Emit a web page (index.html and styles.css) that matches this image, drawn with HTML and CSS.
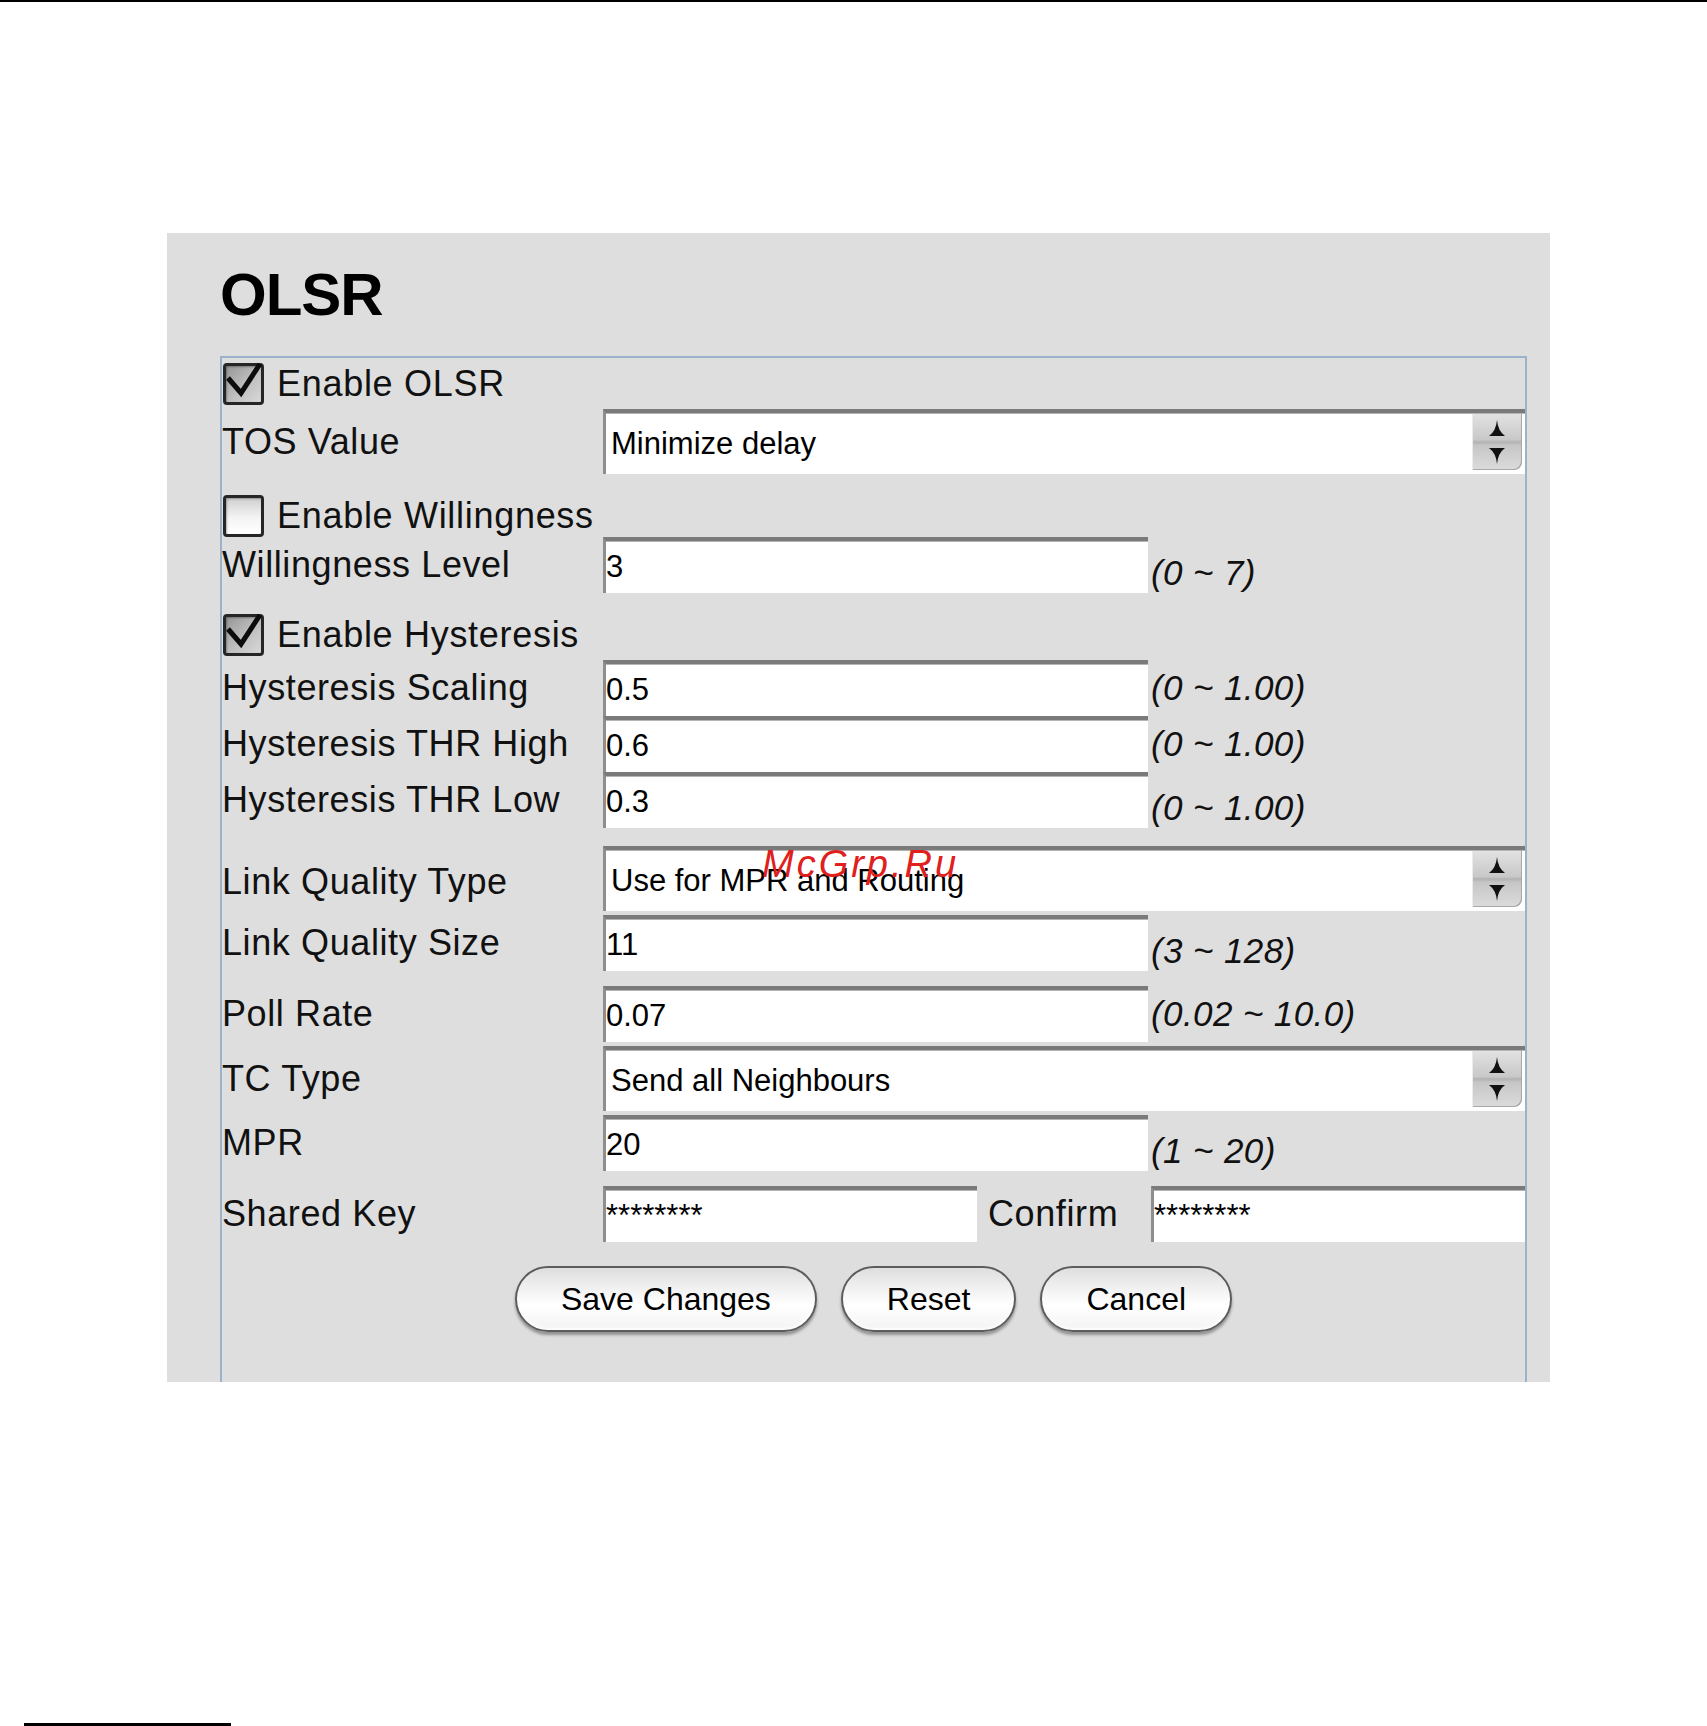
FILE: index.html
```html
<!DOCTYPE html>
<html lang="en">
<head>
    <meta charset="UTF-8">
    <meta name="viewport" content="width=device-width, initial-scale=1.0">
    <title>OLSR</title>
    <link rel="stylesheet" href="styles.css">
</head>
<body>
    <div class="top-rule"></div>

    <div class="panel">
        <h1>OLSR</h1>

        <form id="olsr-form">
            <fieldset>
                <label class="check-row">
                    <span class="check checked">
                        <svg viewBox="0 0 35 36" width="35" height="36"><path d="M2 12 L15 27 L34 -2" /></svg>
                    </span>
                    <span>Enable OLSR</span>
                </label>

                <div class="row select-row tight">
                    <span class="label">TOS Value</span>
                    <div class="select-wrap">
                        <select id="tos-value"><option>Minimize delay</option></select>
                        <span class="spinner">
                            <svg viewBox="0 0 50 56" width="50" height="56"><path d="M25 6 Q26 17 33 22 H17 Q24 17 25 6 Z" /><path d="M17 34 H33 Q26 39 25 50 Q24 39 17 34 Z" /></svg>
                        </span>
                    </div>
                </div>

                <label class="check-row apart">
                    <span class="check"></span>
                    <span>Enable Willingness</span>
                </label>

                <div class="row">
                    <span class="label">Willingness Level</span>
                    <input class="text-input" type="text" value="3">
                    <span class="range low">(0 ~ 7)</span>
                </div>

                <label class="check-row apart">
                    <span class="check checked">
                        <svg viewBox="0 0 35 36" width="35" height="36"><path d="M2 12 L15 27 L34 -2" /></svg>
                    </span>
                    <span>Enable Hysteresis</span>
                </label>

                <div class="row tight">
                    <span class="label">Hysteresis Scaling</span>
                    <input class="text-input" type="text" value="0.5">
                    <span class="range">(0 ~ 1.00)</span>
                </div>

                <div class="row">
                    <span class="label">Hysteresis THR High</span>
                    <input class="text-input" type="text" value="0.6">
                    <span class="range">(0 ~ 1.00)</span>
                </div>

                <div class="row">
                    <span class="label">Hysteresis THR Low</span>
                    <input class="text-input" type="text" value="0.3">
                    <span class="range low">(0 ~ 1.00)</span>
                </div>

                <div class="row select-row loose">
                    <span class="label low">Link Quality Type</span>
                    <div class="select-wrap">
                        <select id="lq-type"><option>Use for MPR and Routing</option></select>
                        <span class="spinner">
                            <svg viewBox="0 0 50 56" width="50" height="56"><path d="M25 6 Q26 17 33 22 H17 Q24 17 25 6 Z" /><path d="M17 34 H33 Q26 39 25 50 Q24 39 17 34 Z" /></svg>
                        </span>
                    </div>
                </div>

                <div class="row tight">
                    <span class="label">Link Quality Size</span>
                    <input class="text-input" type="text" value="11">
                    <span class="range low">(3 ~ 128)</span>
                </div>

                <div class="row loose">
                    <span class="label">Poll Rate</span>
                    <input class="text-input" type="text" value="0.07">
                    <span class="range">(0.02 ~ 10.0)</span>
                </div>

                <div class="row select-row tight">
                    <span class="label">TC Type</span>
                    <div class="select-wrap">
                        <select id="tc-type"><option>Send all Neighbours</option></select>
                        <span class="spinner">
                            <svg viewBox="0 0 50 56" width="50" height="56"><path d="M25 6 Q26 17 33 22 H17 Q24 17 25 6 Z" /><path d="M17 34 H33 Q26 39 25 50 Q24 39 17 34 Z" /></svg>
                        </span>
                    </div>
                </div>

                <div class="row tight">
                    <span class="label">MPR</span>
                    <input class="text-input" type="text" value="20">
                    <span class="range low">(1 ~ 20)</span>
                </div>

                <div class="row loose">
                    <span class="label">Shared Key</span>
                    <div class="key-pair">
                        <input class="text-input key" type="text" value="********">
                        <span class="label confirm">Confirm</span>
                    </div>
                    <input class="text-input confirm-input" type="text" value="********">
                </div>

                <div class="actions">
                    <button type="submit">Save Changes</button>
                    <button type="reset">Reset</button>
                    <button type="button">Cancel</button>
                </div>
            </fieldset>
        </form>

        <span class="watermark">McGrp.Ru</span>
    </div>

    <div class="foot-rule"></div>
</body>
</html>
```

FILE: styles.css
```css
body {
    margin: 0;
    background: #fff;
    font-family: "Liberation Sans", Arial, sans-serif;
    color: #000;
}
.top-rule {
    height: 2px;
    background: #000;
}
.foot-rule {
    width: 207px;
    height: 3px;
    margin: 341px 0 0 24px;
    background: #000;
}
.panel {
    position: relative;
    box-sizing: border-box;
    width: 1383px;
    height: 1149px;
    margin: 231px 0 0 167px;
    padding: 32px 23px 0 53px;
    background: #dedede;
    overflow: hidden;
}
h1 {
    margin: 0 0 31px 0;
    font-size: 60px;
    line-height: 60px;
    letter-spacing: -1px;
    font-weight: bold;
}
fieldset {
    margin: 0;
    padding: 4px 0 80px 0;
    min-width: 0;
    border: 2px solid #9ab3ca;
    border-bottom: none;
}
.check-row {
    display: flex;
    align-items: center;
    gap: 13px;
    height: 43px;
    font-size: 36px;
    line-height: 43px;
    letter-spacing: 0.7px;
    color: #111;
}
.check {
    display: block;
    width: 35px;
    height: 36px;
    margin-left: 1px;
    border: 3px solid #262626;
    border-radius: 4px;
    background: linear-gradient(to bottom, #cfcfcf, #f4f4f4 55%, #ffffff);
    box-shadow: inset 1px 1px 2px rgba(0, 0, 0, 0.3);
}
.check.checked {
    background: linear-gradient(135deg, #969696, #c0c0c0 55%, #d8d8d8);
}
.check svg {
    display: block;
    overflow: visible;
}
.check svg path {
    fill: none;
    stroke: #0c0c0c;
    stroke-width: 5;
    stroke-linejoin: miter;
}
.row {
    display: grid;
    grid-template-columns: 381px 545px 1fr;
    height: 56px;
}
.select-row {
    height: 65px;
}
.tight {
    margin-top: 4px;
}
.loose {
    margin-top: 15px;
}
.select-row.loose {
    margin-top: 18px;
}
.apart {
    margin-top: 20px;
}
.label {
    font-size: 36px;
    line-height: 56px;
    letter-spacing: 0.6px;
    white-space: nowrap;
    color: #111;
}
.select-row .label {
    line-height: 65px;
}
.select-row .label.low {
    padding-top: 3px;
}
.text-input {
    box-sizing: border-box;
    width: 100%;
    height: 56px;
    margin: 0;
    padding: 0;
    border: none;
    border-top: 4px solid #7a7a7a;
    border-left: 3px solid #8e8e8e;
    box-shadow: inset 0 1px 0 #b4b4b4;
    border-radius: 0;
    background: #fff;
    font: 31px "Liberation Sans", Arial, sans-serif;
    color: #000;
    outline: none;
}
.range {
    padding-left: 3px;
    font-size: 35px;
    font-style: italic;
    line-height: 56px;
    letter-spacing: 0.4px;
    white-space: nowrap;
    color: #111;
}
.range.low {
    padding-top: 8px;
}
.select-wrap {
    position: relative;
    grid-column: 2 / 4;
}
.select-wrap select {
    box-sizing: border-box;
    width: 100%;
    height: 65px;
    margin: 0;
    padding: 0 0 0 5px;
    border: none;
    border-top: 4px solid #7a7a7a;
    border-left: 3px solid #8e8e8e;
    box-shadow: inset 0 1px 0 #b4b4b4;
    border-radius: 0;
    background: #fff;
    font: 31px "Liberation Sans", Arial, sans-serif;
    color: #000;
    appearance: none;
    -webkit-appearance: none;
    outline: none;
}
.spinner {
    position: absolute;
    top: 5px;
    right: 3px;
    width: 50px;
    height: 56px;
    border-bottom-right-radius: 8px;
    background: linear-gradient(to bottom, #e2e2e2 0%, #c8c8c8 46%, #b2b2b2 50%, #c6c6c6 56%, #dcdcdc 100%);
    box-shadow: inset 1px 0 0 #ececec, inset -1px -1px 0 #a8a8a8;
    pointer-events: none;
}
.spinner svg {
    display: block;
}
.spinner svg path {
    fill: #111;
}
.key-pair {
    display: flex;
    align-items: flex-start;
}
.text-input.key {
    width: 374px;
    flex: none;
}
.label.confirm {
    margin-left: 11px;
}
.text-input.confirm-input {
    width: calc(100% - 3px);
    margin-left: 3px;
}
.actions {
    display: flex;
    justify-content: center;
    gap: 24px;
    margin-top: 24px;
}
button {
    box-sizing: border-box;
    height: 66px;
    padding: 0 44px;
    border: 2px solid #5c5c5c;
    border-radius: 33px;
    background: linear-gradient(to bottom, #dedede 0%, #f2f2f2 35%, #ffffff 60%, #f3f3f3 100%);
    box-shadow: 0 3px 3px rgba(0, 0, 0, 0.35), inset 0 -2px 3px rgba(255, 255, 255, 0.9);
    font: 32px "Liberation Sans", Arial, sans-serif;
    color: #000;
    cursor: pointer;
}
.watermark {
    position: absolute;
    left: 595px;
    top: 612px;
    z-index: 2;
    font-size: 38px;
    font-style: italic;
    line-height: 38px;
    letter-spacing: 3px;
    color: #e0201c;
    pointer-events: none;
}
```
